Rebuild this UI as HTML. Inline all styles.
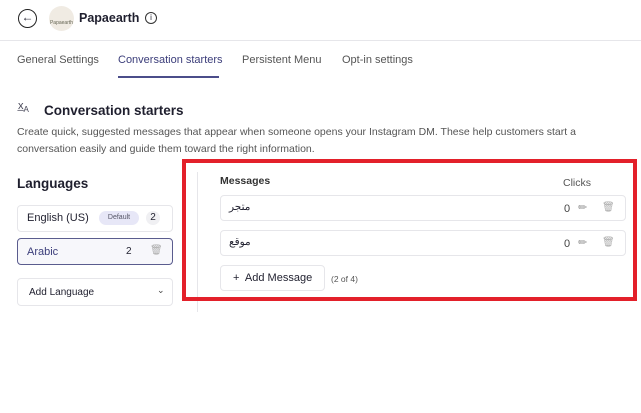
<!DOCTYPE html>
<html><head><style>
*{box-sizing:border-box;margin:0;padding:0}
body{width:641px;height:413px;background:#fff;font-family:"Liberation Sans","Noto Sans CJK SC",sans-serif;position:relative;overflow:hidden;color:#1f1f2e}
.a{position:absolute}
.box{position:absolute;border:1px solid #e6e6ea;border-radius:4px;background:#fff}
.g{color:#555;font-size:10.5px}
</style></head><body>
<div class="a" style="left:18px;top:9px;width:19px;height:19px;border:1.5px solid #222;border-radius:50%;font-size:12px;line-height:15px;text-align:center">&#8592;</div>
<div class="a" style="left:49px;top:6px;width:25px;height:25px;border-radius:50%;background:#f0ebe3;font-size:5px;color:#665;text-align:center;line-height:34px">Papaearth</div>
<div class="a" style="left:79px;top:11px;font-size:12.5px;font-weight:bold">Papaearth</div>
<div class="a" style="left:144px;top:12px;width:12px;height:12px;border:1.3px solid #333;border-radius:50%;font-size:8px;text-align:center;line-height:10px;left:145px">i</div>
<div class="a" style="left:0;top:40px;width:641px;height:1px;background:#e6e6ea"></div>
<div class="a g" style="left:17px;top:54px;font-size:11px">General Settings</div>
<div class="a" style="left:118px;top:54px;font-size:11px;color:#3b3d7a">Conversation starters</div>
<div class="a" style="left:118px;top:76px;width:101px;height:1.5px;background:#4b4d8a"></div>
<div class="a g" style="left:242px;top:54px;font-size:11px">Persistent Menu</div>
<div class="a g" style="left:342px;top:54px;font-size:11px">Opt-in settings</div>
<div class="a" style="left:18px;top:100px;font-size:11px;color:#445">x&#x0332;<sub style="font-size:8px">A</sub></div>
<div class="a" style="left:44px;top:103px;font-size:13.5px;font-weight:bold">Conversation starters</div>
<div class="a g" style="left:17px;top:124px;font-size:10.5px;line-height:17px;width:620px">Create quick, suggested messages that appear when someone opens your Instagram DM. These help customers start a conversation easily and guide them toward the right information.</div>
<div class="a" style="left:17px;top:176px;font-size:13.5px;font-weight:bold">Languages</div>
<div class="box" style="left:17px;top:205px;width:156px;height:27px"></div>
<div class="a" style="left:27px;top:212px;font-size:11px">English (US)</div>
<div class="a" style="left:99px;top:211px;width:40px;height:14px;border-radius:7px;background:#e7e7f7;font-size:7px;color:#556;text-align:center;line-height:14px">Default</div>
<div class="a" style="left:146px;top:211px;width:14px;height:14px;border-radius:50%;background:#f0f0f3;font-size:10px;text-align:center;line-height:14px">2</div>
<div class="box" style="left:17px;top:238px;width:156px;height:27px;border-color:#5a5c8e;background:#f7f7fb"></div>
<div class="a" style="left:27px;top:246px;font-size:11px;color:#3b3d7a">Arabic</div>
<div class="a" style="left:126px;top:246px;font-size:10px">2</div>
<div class="a" style="left:150px;top:245px;font-size:10px;color:#aaa">&#128465;</div>
<div class="box" style="left:17px;top:278px;width:156px;height:28px"></div>
<div class="a" style="left:29px;top:287px;font-size:10px">Add Language</div>
<div class="a" style="left:157px;top:285px;font-size:9px;color:#444">&#8964;</div>
<div class="a" style="left:197px;top:172px;width:1px;height:140px;background:#e6e6ea"></div>
<div class="a" style="left:220px;top:175px;font-size:10.5px;font-weight:bold;color:#333">Messages</div>
<div class="a" style="left:563px;top:177px;font-size:10.5px;color:#555">Clicks</div>
<div class="box" style="left:220px;top:195px;width:406px;height:26px"></div>
<div class="a" style="left:229px;top:201px;font-size:10.5px">متجر</div>
<div class="box" style="left:220px;top:230px;width:406px;height:26px"></div>
<div class="a" style="left:229px;top:236px;font-size:10.5px">موقع</div>
<div class="a" style="left:564px;top:203px;font-size:11px;color:#444">0</div>
<div class="a" style="left:564px;top:238px;font-size:11px;color:#444">0</div>
<div class="a" style="left:578px;top:201px;font-size:11px;color:#999">&#9999;</div>
<div class="a" style="left:578px;top:236px;font-size:11px;color:#999">&#9999;</div>
<div class="a" style="left:602px;top:202px;font-size:10px;color:#aaa">&#128465;</div>
<div class="a" style="left:602px;top:237px;font-size:10px;color:#aaa">&#128465;</div>
<div class="box" style="left:220px;top:265px;width:105px;height:26px"></div>
<div class="a" style="left:233px;top:272px;font-size:11px">+&nbsp; Add Message</div>
<div class="a" style="left:331px;top:274px;font-size:8.5px;color:#555">(2 of 4)</div>
<div class="a" style="left:182px;top:159px;width:455px;height:142px;border:4px solid #e3202a"></div>
</body></html>
